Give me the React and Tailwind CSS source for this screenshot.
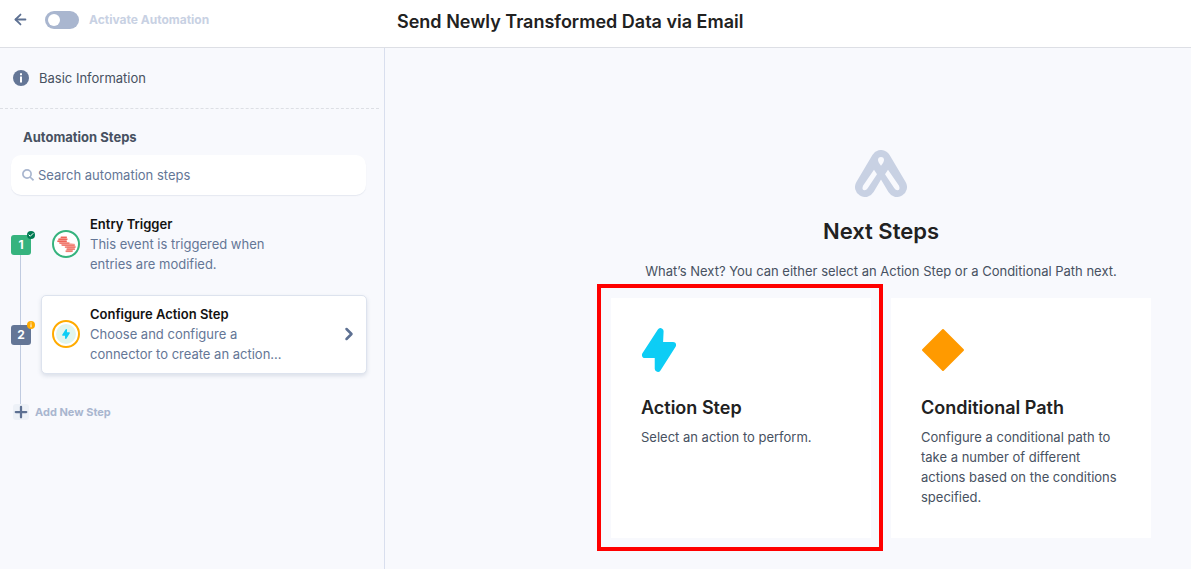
import React, { useState } from "react";
import { ArrowLeft, Check, ChevronRight, Plus } from "lucide-react";

const steps = [
  {
    id: 1,
    title: "Entry Trigger",
    description: "This event is triggered when entries are modified.",
    done: true,
  },
  {
    id: 2,
    title: "Configure Action Step",
    description: "Choose and configure a connector to create an action...",
    done: false,
  },
];

const BoltIcon = ({ className }) => (
  <svg viewBox="154 143 107 134" className={className} aria-hidden="true">
    <path
      d="M212 153 L210 195 H250 L204 267 L204 225 H165 Z"
      fill="#0dcdf5"
      stroke="#0dcdf5"
      strokeWidth="19"
      strokeLinejoin="round"
    />
  </svg>
);

const StackLogo = () => (
  <svg viewBox="0 0 58 52" className="w-[19px] h-[17px]" aria-hidden="true">
    <path
      d="M12 1 H30 L28 18 L54 24 L57 32 L44 50 H27 L32 34 L16 28 L1 16 Z"
      fill="#f9c4bf"
    />
    <path
      d="M12 4H30M4 10H32M1 16H30M7 22H38M14 28H54M24 34H57M29 40H55M26 46H48"
      fill="none"
      stroke="#ee6459"
      strokeWidth="4"
    />
  </svg>
);

const BrandLogo = () => (
  <svg viewBox="45 30 156 141" className="w-[52px] h-[47px]" aria-hidden="true">
    <path
      d="M75 141 L123 60 L171 141"
      fill="none"
      stroke="#c8d1e3"
      strokeWidth="60"
      strokeLinecap="round"
      strokeLinejoin="round"
    />
    <g fill="#f8f9fd">
      <path d="M102 89 L69 137 Q64 150 74 151 Q79 151 83 145 L111 103 Z" />
      <path d="M144 89 L177 137 Q182 150 172 151 Q167 151 163 145 L135 103 Z" />
      <path d="M123 51 A9 9 0 0 1 132 60 Q132 66 123 77 Q114 66 114 60 A9 9 0 0 1 123 51 Z" />
    </g>
  </svg>
);

const InfoIcon = ({ className, fill }) => (
  <svg viewBox="0 0 16 16" className={className} aria-hidden="true">
    <circle cx="8" cy="8" r="8" fill={fill} />
    <path d="M7 3.2h2v2H7zM7 6.6h2v6H7z" fill="#fff" />
  </svg>
);

const StepItem = ({ step }) => (
  <li className="flex items-center">
    <div className="w-[41px] shrink-0 pl-[11px]">
      <div
        className={`relative size-5 rounded-[3px] flex items-center justify-center text-xs font-bold text-white ${
          step.done ? "bg-[#36b37e]" : "bg-[#647696]"
        }`}
      >
        {step.id}
        {step.done ? (
          <span className="absolute -top-1 -right-1 size-2 rounded-full bg-[#007a52] flex items-center justify-center">
            <Check size={6} strokeWidth={4} />
          </span>
        ) : (
          <InfoIcon className="absolute -top-1 -right-1 size-2" fill="#ffab00" />
        )}
      </div>
    </div>
    <button
      className={`flex-1 flex items-center text-left rounded-[5px] border pt-2 pb-[9px] pl-2.5 pr-[7px] ${
        step.done ? "border-transparent" : "border-[#dde3ee] bg-white shadow-[0_2px_4px_rgba(100,118,150,0.2)]"
      }`}
    >
      <span
        className={`size-7 shrink-0 rounded-full border-2 bg-white flex items-center justify-center ${
          step.done ? "border-[#36b37e]" : "border-[#ffab00]"
        }`}
      >
        {step.done ? (
          <StackLogo />
        ) : (
          <span className="size-5 rounded-full bg-[#e0f5ee] flex items-center justify-center">
            <BoltIcon className="w-2 h-2.5" />
          </span>
        )}
      </span>
      <span className="ml-2.5 w-[200px] text-[13px] leading-5 text-[#647696]">
        <span className="block font-semibold text-[#121212]">{step.title}</span>
        {step.description}
      </span>
      {!step.done && <ChevronRight size={20} strokeWidth={3} className="ml-auto text-[#5d7092]" />}
    </button>
  </li>
);

const OptionCard = ({ icon, title, text }) => (
  <button className="w-full h-60 bg-white px-[30px] pt-[30px] flex flex-col items-start text-left">
    <span className="h-11 flex items-center">{icon}</span>
    <span className="mt-6 text-lg leading-6 font-semibold text-[#212121]">{title}</span>
    <span className="mt-[7px] text-[13px] leading-5 text-[#475161]">{text}</span>
  </button>
);

const App = () => {
  const [active, setActive] = useState(false);
  const [search, setSearch] = useState("");

  return (
    <div className="min-h-screen flex flex-col bg-[#f8f9fd] font-['Inter',sans-serif] text-[#475161]">
      <header className="h-12 shrink-0 flex items-center border-b border-[#dddfe5] bg-white pb-2">
        <div className="w-[385px] shrink-0 flex items-center pl-3">
          <button aria-label="Back" className="text-[#5d7092]">
            <ArrowLeft size={17} strokeWidth={2.5} />
          </button>
          <label className="ml-4 flex items-center gap-2.5 text-xs font-bold text-[#c8d1e3]">
            <input
              type="checkbox"
              role="switch"
              checked={active}
              onChange={(e) => setActive(e.target.checked)}
              className="appearance-none w-[34px] h-[18px] rounded-full bg-[#a9b6cf] p-[3px] checked:bg-[#36b37e] before:block before:size-3 before:rounded-full before:bg-white checked:before:ml-4"
            />
            Activate Automation
          </label>
        </div>
        <h1 className="pl-3 pt-1 text-lg leading-6 font-semibold text-[#212121]">
          Send Newly Transformed Data via Email
        </h1>
      </header>

      <div className="flex-1 flex">
        <aside className="w-[385px] shrink-0 border-r border-[#d9dfee]">
          <a
            href="#basic"
            className="mr-[5px] h-[61px] flex items-center gap-2.5 border-b border-dashed border-[#dddfe5] pl-[13px] text-[13px] leading-5"
          >
            <InfoIcon className="size-4" fill="#647696" />
            Basic Information
          </a>
          <h2 className="mt-[18px] pl-[23px] text-[13px] leading-5 font-bold">Automation Steps</h2>

          <label className="mt-2 ml-[11px] mr-[18px] h-10 flex items-center gap-1 rounded-[10px] bg-white pl-[11px] shadow-[0_1px_1px_rgba(100,118,150,0.12)]">
            <svg viewBox="0 0 12 12" className="size-3" fill="none" stroke="#a9b6cf" strokeWidth="1.7" aria-hidden="true">
              <circle cx="5" cy="5" r="4.1" />
              <path d="M8 8 L11.5 11.3" />
            </svg>
            <input
              type="text"
              aria-label="Search automation steps"
              placeholder="Search automation steps"
              value={search}
              onChange={(e) => setSearch(e.target.value)}
              className="flex-1 bg-transparent pt-0.5 text-[13px] text-[#475161] outline-none placeholder:text-[#647696]"
            />
          </label>

          <div className="relative mt-2.5 pr-[17px]">
            {/* line that joins the step numbers */}
            <div className="absolute left-5 top-12 bottom-4 w-px bg-[#c0cbe0]" />
            <ol className="flex flex-col gap-[11px]">
              {steps.map((step) => (
                <StepItem key={step.id} step={step} />
              ))}
            </ol>
            <button className="relative mt-[29px] ml-[13px] flex items-center gap-1.5 text-[11px] leading-[18px] font-bold text-[#a9b6cf]">
              <span className="size-4 rounded-[3px] bg-[#edf1f7] flex items-center justify-center text-[#5d7092]">
                <Plus size={18} strokeWidth={3} className="shrink-0" />
              </span>
              Add New Step
            </button>
          </div>
        </aside>

        <main className="flex-1 flex justify-end pt-[102px] pr-10">
          <section className="flex flex-col items-center">
            <BrandLogo />
            <h2 className="mt-5 text-[22px] leading-7 font-semibold text-[#212121]">Next Steps</h2>
            <p className="mt-4 text-[13px] leading-5">
              What’s Next? You can either select an Action Step or a Conditional Path next.
            </p>
            <div className="mt-[17px] grid grid-cols-[260px_260px] gap-5">
              <div className="relative">
                <OptionCard
                  icon={<BoltIcon className="w-9 h-11" />}
                  title="Action Step"
                  text="Select an action to perform."
                />
                <div className="pointer-events-none absolute -top-3.5 -left-3.5 -right-3 -bottom-[13px] border-4 border-[#ff0000]" />
              </div>
              <OptionCard
                icon={
                  <svg viewBox="0 0 44 44" className="size-11" aria-hidden="true">
                    <path d="M22 2 L42 22 L22 42 L2 22 Z" fill="#ff9a00" stroke="#ff9a00" strokeWidth="2" strokeLinejoin="round" />
                  </svg>
                }
                title="Conditional Path"
                text="Configure a conditional path to take a number of different actions based on the conditions specified."
              />
            </div>
          </section>
        </main>
      </div>
    </div>
  );
};

export default App;
